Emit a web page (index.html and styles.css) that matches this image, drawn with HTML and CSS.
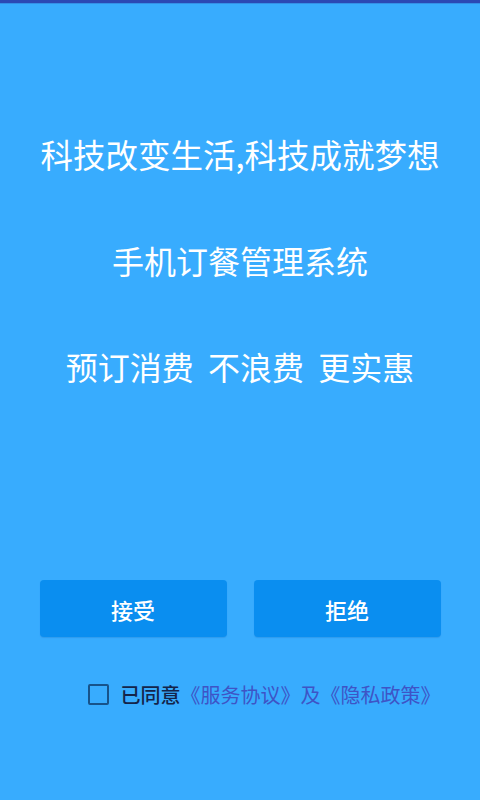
FILE: index.html
```html
<!DOCTYPE html>
<html lang="zh-CN">
<head>
  <meta charset="UTF-8" />
  <meta name="viewport" content="width=device-width, initial-scale=1.0"/>
  <title>手机订餐管理系统</title>
  <link rel="stylesheet" href="styles.css">
</head>
<body>

<div class="top-bar"></div>

<main class="page">
  <div class="slogans">
    <p class="slogan slogan-1">科技改变生活,科技成就梦想</p>
    <p class="slogan slogan-2">手机订餐管理系统</p>
    <p class="slogan slogan-3">预订消费 不浪费 更实惠</p>
  </div>

  <div class="actions">
    <button class="btn" id="acceptBtn">接受</button>
    <button class="btn" id="rejectBtn">拒绝</button>
  </div>

  <label class="agree">
    <span class="check-box"></span>
    <span class="agree-text">已同意</span>
    <span class="agree-link">《服务协议》及《隐私政策》</span>
  </label>
</main>

</body>
</html>
```

FILE: styles.css
```css
html, body {
  margin: 0;
  padding: 0;
}

body {
  width: 480px;
  height: 800px;
  background: #38acfe;
  font-family: "Noto Sans CJK SC", "Noto Sans", sans-serif;
  overflow: hidden;
}

.top-bar {
  height: 3px;
  background: #2b48b4;
  border-bottom: 1px solid #3490e6;
}

.page {
  display: flex;
  flex-direction: column;
  align-items: center;
}

.slogans {
  display: flex;
  flex-direction: column;
  align-items: center;
  gap: 64px;
  padding-top: 129px;
}

.slogan {
  margin: 0;
  color: #ffffff;
  font-size: 32px;
  line-height: 42px;
  white-space: nowrap;
}

.slogan-1 {
  font-size: 32.5px;
}

.slogan-3 {
  word-spacing: 7px;
}

.actions {
  display: flex;
  gap: 27px;
  margin-top: 193px;
}

.btn {
  width: 187px;
  height: 57px;
  border: none;
  border-radius: 4px;
  background: #0a8ef0;
  color: #ffffff;
  font-family: inherit;
  font-size: 22px;
  font-weight: 500;
  box-shadow: 0 1px 1px rgba(0, 60, 140, 0.15);
  cursor: pointer;
}

.agree {
  display: flex;
  align-items: center;
  margin-top: 43px;
  margin-left: 48px;
  font-size: 20px;
}

.check-box {
  width: 17px;
  height: 17px;
  border: 2.5px solid #17538a;
  border-radius: 2px;
  margin-right: 12px;
}

.agree-text {
  color: #14244a;
  font-weight: 500;
}

.agree-link {
  color: #3e54c6;
}
```
